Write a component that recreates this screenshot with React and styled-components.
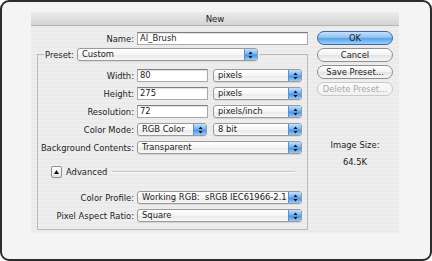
import React from 'react';
import styled, { createGlobalStyle, css } from 'styled-components';

const Global = createGlobalStyle`
  html, body {
    margin: 0;
    padding: 0;
    background: #ffffff;
  }
  body {
    font-family: "DejaVu Sans", "Liberation Sans", sans-serif;
    font-size: 8.4px;
    color: #1c1c1c;
  }
`

const Frame = styled.div`
  width: 432px;
  height: 261px;
  box-sizing: border-box;
  border: 2px solid #2d2d2d;
  border-radius: 9px;
  background: #f4f4f4;
  padding: 10px 0 0 29px;
`

const Window = styled.div`
  width: 368px;
  height: 221px;
  display: flex;
  flex-direction: column;
  background: repeating-linear-gradient(
    to bottom,
    #eeeeee 0px,
    #eeeeee 2px,
    #eaeaea 2px,
    #eaeaea 4px
  );
`

const TitleBar = styled.div`
  height: 14px;
  box-sizing: border-box;
  border-bottom: 1px solid #b4b4b4;
  background: linear-gradient(to bottom, #ececec, #d4d4d4);
  display: flex;
  align-items: center;
  justify-content: center;
  font-size: 8.6px;
  color: #222;
`

const Body = styled.div`
  display: flex;
  flex: 1;
`

const FormCol = styled.div`
  width: 277px;
  padding-top: 6px;
`

const ButtonCol = styled.div`
  width: 76px;
  margin-left: 9px;
  padding-top: 5px;
  display: flex;
  flex-direction: column;
  gap: 3px;
`

const Row = styled.div`
  display: grid;
  grid-template-columns: ${ props => props.labelWidth }px auto;
  column-gap: 3px;
  align-items: center;
  height: 13px;
  margin-top: ${ props => props.top || 0 }px;
`

const Label = styled.div`
  text-align: right;
  white-space: nowrap;
`

const Controls = styled.div`
  display: flex;
  gap: ${ props => props.gap || 5 }px;
`

const Input = styled.div`
  width: ${ props => props.width }px;
  height: 13px;
  box-sizing: border-box;
  background: #ffffff;
  border: 1px solid #aaaaaa;
  border-top-color: #7d7d7d;
  box-shadow: inset 0 1px 1px rgba(0, 0, 0, 0.12);
  padding-left: 2px;
  line-height: 11px;
  white-space: nowrap;
  overflow: hidden;
`

const SelectBox = styled.div`
  width: ${ props => props.width }px;
  height: 13px;
  box-sizing: border-box;
  display: flex;
  border: 1px solid #9a9a9a;
  border-radius: 3px;
  background: linear-gradient(to bottom, #ffffff, #f6f6f6 50%, #e8e8e8 51%, #f8f8f8);
  box-shadow: 0 1px 0 rgba(0, 0, 0, 0.08);
  overflow: hidden;
`

const SelectText = styled.div`
  flex: 1;
  padding-left: 4px;
  line-height: 11px;
  white-space: nowrap;
  overflow: hidden;
`

const Stepper = styled.div`
  width: 12px;
  border-left: 1px solid #5f8fc8;
  background: linear-gradient(to bottom, #c2e0fc, #78b6f3 45%, #4394e8 55%, #98ccfb);
  display: flex;
  align-items: center;
  justify-content: center;
`

const GroupBox = styled.fieldset`
  margin: 3px 0 0 6px;
  width: 271px;
  box-sizing: border-box;
  border: 1px solid #b9b9b9;
  padding: 0 0 7px 0;
  min-width: 0;
`

const Legend = styled.legend`
  margin-left: 6px;
  padding: 0 2px 0 1px;
  display: flex;
  align-items: center;
  gap: 3px;
`

const Disclosure = styled.div`
  width: 11px;
  height: 12px;
  box-sizing: border-box;
  margin-left: 13px;
  border: 1px solid #8e8e8e;
  border-radius: 2px;
  background: linear-gradient(to bottom, #ffffff, #e4e4e4);
  display: flex;
  align-items: center;
  justify-content: center;
`

const AdvancedRow = styled.div`
  display: flex;
  align-items: center;
  height: 12px;
  margin-top: 12px;
`

const AdvancedText = styled.span`
  margin-left: 4px;
`

const Separator = styled.div`
  flex: 1;
  margin: 0 12px 0 5px;
  height: 1px;
  background: #c6c6c6;
  border-bottom: 1px solid #fbfbfb;
`

const Button = styled.div`
  height: 14px;
  box-sizing: border-box;
  border-radius: 7px;
  border: 1px solid #8f8f8f;
  background: linear-gradient(to bottom, #ffffff, #f2f2f2 50%, #e3e3e3 51%, #f7f7f7);
  display: flex;
  align-items: center;
  justify-content: center;
  white-space: nowrap;
  ${ props => props.primary && css`
    border-color: #44679f;
    background: linear-gradient(to bottom, #c7e1fb, #8fc2f3 45%, #5aa2ea 55%, #9bd0fb);
  ` }
  ${ props => props.disabled && css`
    border-color: #c9c9c9;
    color: #a9a9a9;
    background: linear-gradient(to bottom, #fafafa, #f1f1f1);
  ` }
`

const Info = styled.div`
  text-align: center;
  line-height: 12px;
  margin-top: ${ props => props.top }px;
`

function Arrows() {
  return (
    <svg width='5' height='8' viewBox='0 0 5 8'>
      <path d='M2.5 0.5 L4.5 3 L0.5 3 Z' fill='#111' />
      <path d='M0.5 5 L4.5 5 L2.5 7.5 Z' fill='#111' />
    </svg>
  )
}

function Select({ width, children }) {
  return (
    <SelectBox width={width}>
      <SelectText>{children}</SelectText>
      <Stepper><Arrows /></Stepper>
    </SelectBox>
  )
}

export default function App() {
  return (
    <>
      <Global />
      <Frame>
        <Window>
          <TitleBar>New</TitleBar>
          <Body>
            <FormCol>
              <Row labelWidth={103}>
                <Label>Name:</Label>
                <Input width={171}>AI_Brush</Input>
              </Row>
              <GroupBox>
                <Legend>
                  <span>Preset:</span>
                  <Select width={181}>Custom</Select>
                </Legend>
                <Row labelWidth={96} top={8}>
                  <Label>Width:</Label>
                  <Controls>
                    <Input width={71}>80</Input>
                    <Select width={89}>pixels</Select>
                  </Controls>
                </Row>
                <Row labelWidth={96} top={5}>
                  <Label>Height:</Label>
                  <Controls>
                    <Input width={71}>275</Input>
                    <Select width={89}>pixels</Select>
                  </Controls>
                </Row>
                <Row labelWidth={96} top={5}>
                  <Label>Resolution:</Label>
                  <Controls>
                    <Input width={71}>72</Input>
                    <Select width={89}>pixels/inch</Select>
                  </Controls>
                </Row>
                <Row labelWidth={96} top={5}>
                  <Label>Color Mode:</Label>
                  <Controls gap={6}>
                    <Select width={70}>RGB Color</Select>
                    <Select width={89}>8 bit</Select>
                  </Controls>
                </Row>
                <Row labelWidth={96} top={5}>
                  <Label>Background Contents:</Label>
                  <Select width={165}>Transparent</Select>
                </Row>
                <AdvancedRow>
                  <Disclosure>
                    <svg width='5' height='4' viewBox='0 0 5 4'>
                      <path d='M2.5 0 L5 4 L0 4 Z' fill='#111' />
                    </svg>
                  </Disclosure>
                  <AdvancedText>Advanced</AdvancedText>
                  <Separator />
                </AdvancedRow>
                <Row labelWidth={96} top={13}>
                  <Label>Color Profile:</Label>
                  <Select width={165}>Working RGB:&nbsp; sRGB IEC61966-2.1</Select>
                </Row>
                <Row labelWidth={96} top={5}>
                  <Label>Pixel Aspect Ratio:</Label>
                  <Select width={165}>Square</Select>
                </Row>
              </GroupBox>
            </FormCol>
            <ButtonCol>
              <Button primary>OK</Button>
              <Button>Cancel</Button>
              <Button>Save Preset...</Button>
              <Button disabled>Delete Preset...</Button>
              <Info top={40}>Image Size:</Info>
              <Info top={2}>64.5K</Info>
            </ButtonCol>
          </Body>
        </Window>
      </Frame>
    </>
  )
}
